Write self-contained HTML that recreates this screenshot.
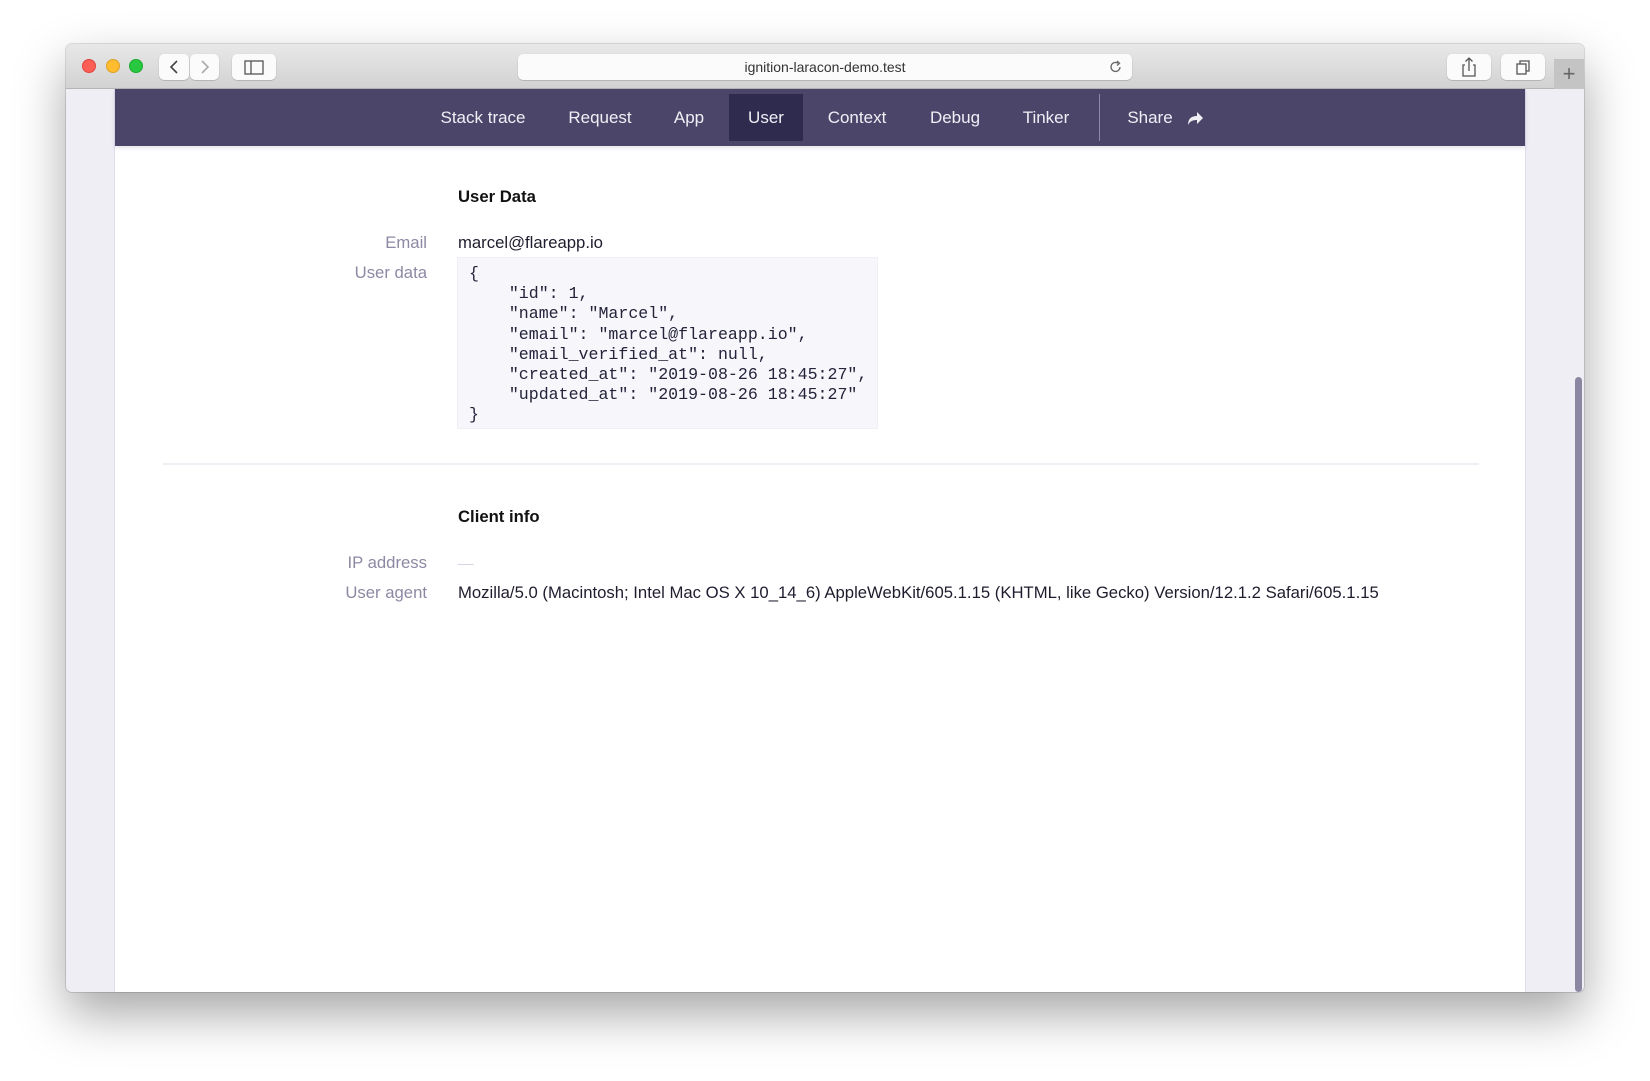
<!DOCTYPE html>
<html><head><meta charset="utf-8"><style>
*{margin:0;padding:0;box-sizing:border-box}
body{width:1650px;height:1081px;background:#fff;position:relative;overflow:hidden;font-family:"Liberation Sans",sans-serif}
.win{position:absolute;left:66px;top:44px;width:1518px;height:948px;border-radius:6px;overflow:hidden;box-shadow:0 22px 50px rgba(0,0,0,.35),0 0 0 1px rgba(0,0,0,.12);background:#eeeef4}
.tb{position:absolute;left:0;top:0;width:100%;height:45px;background:linear-gradient(#e8e8e8,#d2d2d2);border-bottom:1px solid #b5b5b5}
.dot{position:absolute;top:15px;width:14px;height:14px;border-radius:50%}
.btn{position:absolute;top:10px;height:26px;background:#fbfbfb;border-radius:5px;box-shadow:0 0.5px 1px rgba(0,0,0,.3)}
.url{position:absolute;left:452px;top:10px;width:614px;height:26px;background:#fbfbfb;border-radius:5px;box-shadow:0 0.5px 1px rgba(0,0,0,.3);text-align:center;font-size:14px;line-height:26px;color:#333}
.page{position:absolute;left:48px;top:45px;width:1412px;height:903px;background:#fff;border-left:1px solid #dcdcec;border-right:1px solid #dcdcec}
.nav{position:absolute;left:0;top:0;width:100%;height:57px;background:#4b4669;box-shadow:0 2px 4px rgba(75,70,105,.15)}
.ni{position:absolute;top:0;height:57px;line-height:57px;color:#f0eff6;font-size:17px;transform:translateX(-50%);white-space:nowrap}
.act{position:absolute;left:614px;top:5px;width:74px;height:47px;background:#2f2b4e}
.lbl{position:absolute;right:1098px;color:#8c89a3;font-size:16.7px;white-space:nowrap}
.val{position:absolute;left:343px;color:#1e1d2e;font-size:16.7px;white-space:nowrap}
h3{position:absolute;left:343px;font-size:16.7px;font-weight:bold;color:#111}
pre{position:absolute;left:342px;top:168px;width:421px;height:172px;background:#f7f7fb;border:1px solid #efeff5;font-family:"Liberation Mono",monospace;font-size:16.6px;line-height:20.2px;color:#24233a;padding:6px 11px}
</style></head><body>
<div class="win">
 <div class="tb">
  <div class="dot" style="left:16px;background:#fd5f57;border:1px solid #e0443e"></div>
  <div class="dot" style="left:40px;background:#febc2e;border:1px solid #dea123"></div>
  <div class="dot" style="left:63px;background:#28c840;border:1px solid #1aab29"></div>
  <div class="btn" style="left:93px;width:30px"><svg width="30" height="26"><path d="M18 7l-6 6 6 6" stroke="#444" stroke-width="1.6" fill="none"/></svg></div>
  <div class="btn" style="left:124px;width:29px"><svg width="29" height="26"><path d="M12 7l6 6-6 6" stroke="#aaa" stroke-width="1.6" fill="none"/></svg></div>
  <div class="btn" style="left:166px;width:44px"><svg width="44" height="26"><rect x="13" y="7" width="18" height="13" stroke="#555" stroke-width="1.3" fill="none"/><path d="M19 7v13" stroke="#555" stroke-width="1.3"/></svg></div>
  <div class="url">ignition-laracon-demo.test<svg style="position:absolute;right:8px;top:5px" width="16" height="16"><path d="M12 8a4.5 4.5 0 1 1-2-3.8" stroke="#666" stroke-width="1.3" fill="none"/><path d="M9 2l2.5 2.2L9 6.5" stroke="#666" stroke-width="1.3" fill="none"/></svg></div>
  <div class="btn" style="left:1381px;width:44px"><svg width="44" height="26"><path d="M18 11h-2v11h12V11h-2M22 17V4M18.5 7.5L22 4l3.5 3.5" stroke="#555" stroke-width="1.3" fill="none"/></svg></div>
  <div class="btn" style="left:1435px;width:44px"><svg width="44" height="26"><rect x="16" y="10" width="9" height="10" stroke="#555" stroke-width="1.3" fill="none"/><path d="M19 10V7h9v10h-3" stroke="#555" stroke-width="1.3" fill="none"/></svg></div>
  <div style="position:absolute;left:1488px;top:15px;width:30px;height:30px;background:#c4c4c4;color:#666;font-size:22px;text-align:center;line-height:30px">+</div>
 </div>
 <div class="page">
  <div class="nav">
   <div class="act"></div>
   <div class="ni" style="left:368px">Stack trace</div>
   <div class="ni" style="left:485px">Request</div>
   <div class="ni" style="left:574px">App</div>
   <div class="ni" style="left:651px">User</div>
   <div class="ni" style="left:742px">Context</div>
   <div class="ni" style="left:840px">Debug</div>
   <div class="ni" style="left:931px">Tinker</div>
   <div style="position:absolute;left:984px;top:5px;width:1px;height:47px;background:#8c88a6"></div>
   <div class="ni" style="left:1035px">Share</div>
   <svg style="position:absolute;left:1071px;top:20px" width="18" height="18"><path d="M2 16c0-6 3-9 9-9V3l6 6-6 6v-4c-4 0-7 1-9 5z" fill="#f0eff6"/></svg>
  </div>
  <h3 style="top:98px">User Data</h3>
  <div class="lbl" style="top:144px">Email</div><div class="val" style="top:144px">marcel@flareapp.io</div>
  <div class="lbl" style="top:174px">User data</div>
  <pre>{
    "id": 1,
    "name": "Marcel",
    "email": "marcel@flareapp.io",
    "email_verified_at": null,
    "created_at": "2019-08-26 18:45:27",
    "updated_at": "2019-08-26 18:45:27"
}</pre>
  <div style="position:absolute;left:48px;top:374px;width:1316px;height:2px;background:#eeeef4"></div>
  <h3 style="top:418px">Client info</h3>
  <div class="lbl" style="top:464px">IP address</div><div style="position:absolute;left:343px;top:475px;width:16px;height:1px;background:#d6d5e2"></div>
  <div class="lbl" style="top:494px">User agent</div><div class="val" style="top:494px">Mozilla/5.0 (Macintosh; Intel Mac OS X 10_14_6) AppleWebKit/605.1.15 (KHTML, like Gecko) Version/12.1.2 Safari/605.1.15</div>
 </div>
 <div style="position:absolute;left:1509px;top:333px;width:7px;height:615px;border-radius:4px;background:#8b87a3"></div>
</div>
</body></html>
